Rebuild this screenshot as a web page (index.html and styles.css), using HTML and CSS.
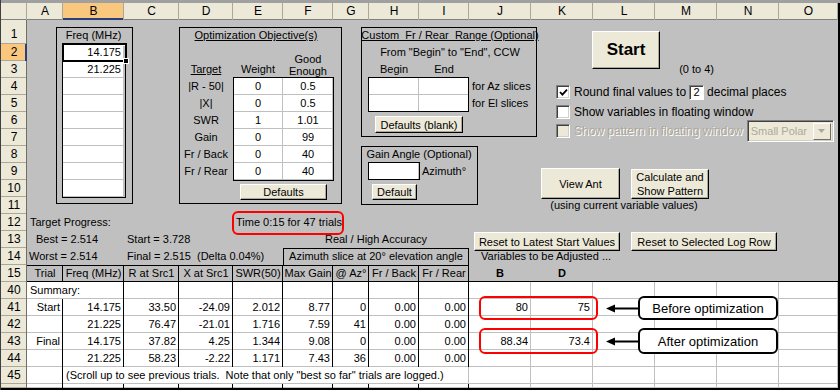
FILE: index.html
```html
<!DOCTYPE html>
<html>
<head>
<meta charset="utf-8">
<title>Optimizer</title>
<link rel="stylesheet" href="styles.css">
</head>
<body>
<div class="sheet">
  <div class="row hdr">
    <div class="ch"></div><div class="ch">A</div><div class="ch sel">B</div><div class="ch">C</div><div class="ch">D</div><div class="ch">E</div><div class="ch">F</div><div class="ch">G</div><div class="ch">H</div><div class="ch">I</div><div class="ch">J</div><div class="ch">K</div><div class="ch">L</div><div class="ch">M</div><div class="ch">N</div><div class="ch">O</div>
  </div>
  <div class="row r1">
    <div class="rn">1</div>
    <div class="c cB ctr"><span>Freq (MHz)</span></div>
    <div class="c sDF ctr"><u>Optimization Objective(s)</u></div>
    <div class="c sHJ ctr pre"><u>Custom  Fr / Rear  Range (Optional)</u></div>
  </div>
  <div class="row">
    <div class="rn sel">2</div>
    <div class="c cB w r">14.175</div>
    <div class="c sHJ ctr"><span>From "Begin" to "End", CCW</span></div>
  </div>
  <div class="row">
    <div class="rn">3</div>
    <div class="c cB w r">21.225</div>
    <div class="c cD ctr"><u>Target</u></div>
    <div class="c cE ctr"><span>Weight</span></div>
    <div class="c cF ge"><span>Good</span><span>Enough</span></div>
    <div class="c cH ctr"><span>Begin</span></div>
    <div class="c cI ctr"><span>End</span></div>
    <div class="c cM r">(0 to 4)</div>
  </div>
  <div class="row">
    <div class="rn">4</div>
    <div class="c cB w"></div>
    <div class="c cD ctr"><span>|R - 50|</span></div>
    <div class="c cE w ctr"><span>0</span></div>
    <div class="c cF w ctr"><span>0.5</span></div>
    <div class="c cH w"></div>
    <div class="c cI w"></div>
    <div class="c cJ">for Az slices</div>
  </div>
  <div class="row">
    <div class="rn">5</div>
    <div class="c cB w"></div>
    <div class="c cD ctr"><span>|X|</span></div>
    <div class="c cE w ctr"><span>0</span></div>
    <div class="c cF w ctr"><span>0.5</span></div>
    <div class="c cH w"></div>
    <div class="c cI w"></div>
    <div class="c cJ">for El slices</div>
  </div>
  <div class="row">
    <div class="rn">6</div>
    <div class="c cB w"></div>
    <div class="c cD ctr"><span>SWR</span></div>
    <div class="c cE w ctr"><span>1</span></div>
    <div class="c cF w ctr"><span>1.01</span></div>
  </div>
  <div class="row">
    <div class="rn">7</div>
    <div class="c cB w"></div>
    <div class="c cD ctr"><span>Gain</span></div>
    <div class="c cE w ctr"><span>0</span></div>
    <div class="c cF w ctr"><span>99</span></div>
  </div>
  <div class="row">
    <div class="rn">8</div>
    <div class="c cB w"></div>
    <div class="c cD ctr"><span>Fr / Back</span></div>
    <div class="c cE w ctr"><span>0</span></div>
    <div class="c cF w ctr"><span>40</span></div>
    <div class="c sHI ctr"><span>Gain Angle (Optional)</span></div>
  </div>
  <div class="row">
    <div class="rn">9</div>
    <div class="c cB w"></div>
    <div class="c cD ctr"><span>Fr / Rear</span></div>
    <div class="c cE w ctr"><span>0</span></div>
    <div class="c cF w ctr"><span>40</span></div>
    <div class="c cH w"></div>
    <div class="c cI">Azimuth°</div>
  </div>
  <div class="row">
    <div class="rn">10</div>
    <div class="c cB w"></div>
  </div>
  <div class="row">
    <div class="rn">11</div>
    <div class="c sKM ctr"><span>(using current variable values)</span></div>
  </div>
  <div class="row">
    <div class="rn">12</div>
    <div class="c cA">Target Progress:</div>
    <div class="c cE">Time 0:15 for 47 trials</div>
  </div>
  <div class="row">
    <div class="rn">13</div>
    <div class="c cA ind">Best = 2.514</div>
    <div class="c cC">Start = 3.728</div>
    <div class="c sFI ctr"><span>Real / High Accuracy</span></div>
  </div>
  <div class="row">
    <div class="rn">14</div>
    <div class="c cA tight">Worst = 2.514</div>
    <div class="c cC pre">Final = 2.515  (Delta 0.04%)</div>
    <div class="c sFI ctr azb"><span>Azimuth slice at 20° elevation angle</span></div>
    <div class="c cJ vind">Variables to be Adjusted ...</div>
  </div>
  <div class="row r15">
    <div class="rn">15</div>
    <div class="c cA th"><span>Trial</span></div>
    <div class="c cB th"><span>Freq (MHz)</span></div>
    <div class="c cC th"><span>R at Src1</span></div>
    <div class="c cD th"><span>X at Src1</span></div>
    <div class="c cE th"><span>SWR(50)</span></div>
    <div class="c cF th"><span>Max Gain</span></div>
    <div class="c cG th"><span>@ Az°</span></div>
    <div class="c cH th"><span>Fr / Back</span></div>
    <div class="c cI th"><span>Fr / Rear</span></div>
    <div class="c cJ ctr b"><span>B</span></div>
    <div class="c cK ctr b"><span>D</span></div>
  </div>
  <div class="row">
    <div class="rn">40</div>
    <div class="c sAB wd">Summary:</div>
    <div class="c wd"></div><div class="c wd"></div><div class="c wd"></div><div class="c wd"></div><div class="c wd"></div><div class="c wd"></div><div class="c wd"></div>
    <div class="c w"></div><div class="c w"></div><div class="c w"></div><div class="c w"></div><div class="c w"></div><div class="c w"></div>
  </div>
  <div class="row">
    <div class="rn">41</div>
    <div class="c wd r">Start</div><div class="c wd r">14.175</div><div class="c wd r">33.50</div><div class="c wd r">-24.09</div><div class="c wd r">2.012</div><div class="c wd r">8.77</div><div class="c wd r">0</div><div class="c wd r">0.00</div><div class="c wd r">0.00</div>
    <div class="c w r">80</div><div class="c w r">75</div><div class="c w"></div><div class="c w"></div><div class="c w"></div><div class="c w"></div>
  </div>
  <div class="row">
    <div class="rn">42</div>
    <div class="c wd r"></div><div class="c wd r">21.225</div><div class="c wd r">76.47</div><div class="c wd r">-21.01</div><div class="c wd r">1.716</div><div class="c wd r">7.59</div><div class="c wd r">41</div><div class="c wd r">0.00</div><div class="c wd r">0.00</div>
    <div class="c w"></div><div class="c w"></div><div class="c w"></div><div class="c w"></div><div class="c w"></div><div class="c w"></div>
  </div>
  <div class="row">
    <div class="rn">43</div>
    <div class="c wd r">Final</div><div class="c wd r">14.175</div><div class="c wd r">37.82</div><div class="c wd r">4.25</div><div class="c wd r">1.344</div><div class="c wd r">9.08</div><div class="c wd r">0</div><div class="c wd r">0.00</div><div class="c wd r">0.00</div>
    <div class="c w r">88.34</div><div class="c w r">73.4</div><div class="c w"></div><div class="c w"></div><div class="c w"></div><div class="c w"></div>
  </div>
  <div class="row">
    <div class="rn">44</div>
    <div class="c wd r"></div><div class="c wd r">21.225</div><div class="c wd r">58.23</div><div class="c wd r">-2.22</div><div class="c wd r">1.171</div><div class="c wd r">7.43</div><div class="c wd r">36</div><div class="c wd r">0.00</div><div class="c wd r">0.00</div>
    <div class="c w"></div><div class="c w"></div><div class="c w"></div><div class="c w"></div><div class="c w"></div><div class="c w"></div>
  </div>
  <div class="row">
    <div class="rn">45</div>
    <div class="c wd"></div>
    <div class="c sBI w pre">(Scroll up to see previous trials.  Note that only "best so far" trials are logged.)</div>
    <div class="c w"></div><div class="c w"></div><div class="c w"></div><div class="c w"></div><div class="c w"></div><div class="c w"></div>
  </div>
  <div class="row r46">
    <div class="rn"></div>
    <div class="c wd"></div><div class="c wd"></div><div class="c wd"></div><div class="c wd"></div><div class="c wd"></div><div class="c wd"></div><div class="c wd"></div><div class="c wd"></div><div class="c wd"></div>
    <div class="c w"></div><div class="c w"></div><div class="c w"></div><div class="c w"></div><div class="c w"></div><div class="c w"></div>
  </div>

  <!-- drawn frames -->
  <div class="fr f-freq"></div>
  <div class="fr f-freqin"></div>
  <div class="selbox"></div>
  <div class="handle"></div>
  <div class="fr f-opt"></div>
  <div class="fr f-optt"></div>
  <div class="fr f-cust"></div>
  <div class="fr f-custt"></div>
  <div class="fr f-gain"></div>
  <div class="fr f-gaint"></div>

  <!-- buttons -->
  <div class="btn b-defaults">Defaults</div>
  <div class="btn b-blank">Defaults (blank)</div>
  <div class="btn b-default">Default</div>
  <div class="btn b-start">Start</div>
  <div class="btn b-view">View Ant</div>
  <div class="btn b-calc">Calculate and<br>Show Pattern</div>
  <div class="btn b-reset1">Reset to Latest Start Values</div>
  <div class="btn b-reset2">Reset to Selected Log Row</div>

  <!-- options -->
  <div class="opts">
    <div class="opt">
      <span class="cb"><svg width="9" height="9" viewBox="0 0 9 9"><polyline points="1,4 3.4,6.6 8,1.6" fill="none" stroke="#000" stroke-width="1.8"/></svg></span>
      <span>Round final values to</span>
      <span class="tb">2</span>
      <span>decimal places</span>
    </div>
    <div class="opt">
      <span class="cb"></span>
      <span>Show variables in floating window</span>
    </div>
    <div class="opt dis">
      <span class="cb off"></span>
      <span>Show pattern in floating window</span>
      <span class="dd"><span class="ddt">Small Polar</span><span class="ddb"><svg width="7" height="4" viewBox="0 0 7 4"><path d="M0 0H7L3.5 4Z" fill="#aca899"/></svg></span></span>
    </div>
  </div>

  <!-- highlights and callouts -->
  <div class="red red-time"></div>
  <div class="red red-41"></div>
  <div class="red red-43"></div>
  <svg class="arr arr1" width="32" height="9" viewBox="0 0 32 9"><path d="M0 4.5L9 0.5V8.5Z" fill="#000"/><rect x="8" y="3.5" width="24" height="2" fill="#000"/></svg>
  <svg class="arr arr2" width="32" height="9" viewBox="0 0 32 9"><path d="M0 4.5L9 0.5V8.5Z" fill="#000"/><rect x="8" y="3.5" width="24" height="2" fill="#000"/></svg>
  <div class="call call1">Before optimization</div>
  <div class="call call2">After optimization</div>
</div>
</body>
</html>
```

FILE: styles.css
```css
* { box-sizing: border-box; }
html, body { margin: 0; padding: 0; }
body {
  background: #fff;
  font-family: "Liberation Sans", Arial, sans-serif;
  font-size: 11px;
  color: #000;
}
.sheet {
  position: relative;
  width: 840px;
  height: 390px;
  padding: 3px 2px 2px 1px;
  background: #c0c0c0;
  box-shadow: inset 1px 0 0 #404040, inset 0 3px 0 #a0a0a0, inset -2px 0 0 #000, inset 0 -2px 0 #000;
  overflow: hidden;
}
.row {
  display: grid;
  grid-template-columns: 26px 36px 61px 55px 54px 50px 50px 36px 50px 50px 62px 62px 62px 62px 62px 59px;
  grid-template-rows: 17px;
  height: 17px;
}
.row > * { grid-row: 1; }
.r1 { height: 24px; grid-template-rows: 24px; }
.r46 { height: 4px; grid-template-rows: 4px; overflow: hidden; }

.ch {
  background: #ece9d8;
  text-align: center;
  font-size: 12px;
  line-height: 17px;
  box-shadow: inset -1px 0 0 #aca899, inset 0 -1px 0 #808080;
}
.ch.sel { background: #f9c77e; box-shadow: inset -1px 0 0 #aca899, inset 0 -2px 0 #2a3f7c; }
.rn {
  grid-column: 1;
  background: #ece9d8;
  text-align: center;
  font-size: 12px;
  line-height: 17px;
  box-shadow: inset -1px 0 0 #716f64, inset 0 -1px 0 #aca899;
  overflow: hidden;
}
.rn.sel { background: #f9c77e; box-shadow: inset -2px 0 0 #2a3f7c, inset 0 -1px 0 #aca899; }
.r1 .rn { padding-top: 6px; }
.r1 .c { align-self: end; }

.c { line-height: 17px; padding: 0 3px; white-space: nowrap; }
.ctr { display: flex; justify-content: center; }
.r { text-align: right; }
.pre { white-space: pre; }
.b { font-weight: bold; }
.ind { padding-left: 9px; }
.tight { padding-left: 2px; }
.vind { padding-left: 12px; }
.w { background: #fff; box-shadow: inset -1px -1px 0 #c0c0c0; }
.wd { background: #fff; box-shadow: inset -1px 0 0 #000, inset 0 -1px 0 #c0c0c0; }

.cA { grid-column: 2; } .cB { grid-column: 3; } .cC { grid-column: 4; } .cD { grid-column: 5; }
.cE { grid-column: 6; } .cF { grid-column: 7; } .cG { grid-column: 8; } .cH { grid-column: 9; }
.cI { grid-column: 10; } .cJ { grid-column: 11; } .cK { grid-column: 12; } .cL { grid-column: 13; }
.cM { grid-column: 14; } .cN { grid-column: 15; } .cO { grid-column: 16; }
.sDF { grid-column: 5 / 8; }
.sHJ { grid-column: 9 / 12; }
.sHI { grid-column: 9 / 11; }
.sFI { grid-column: 7 / 11; }
.sKM { grid-column: 12 / 15; }
.sAB { grid-column: 2 / 4; }
.sBI { grid-column: 3 / 11; }

.ge {
  display: flex;
  flex-direction: column;
  justify-content: flex-end;
  align-items: center;
  line-height: 12px;
  padding-bottom: 1px;
}
.azb { box-shadow: inset 1px 0 0 #000, inset -1px 0 0 #000, inset 0 1px 0 #000; }
.r15 { box-shadow: inset 0 -1px 0 #000; }
.th {
  display: flex;
  justify-content: center;
  box-shadow: inset -1px 0 0 #000, inset 0 1px 0 #000;
}

/* frames */
.fr { position: absolute; border: 1px solid #000; }
.f-freq { left: 56px; top: 27px; width: 77px; height: 177px; }
.f-freqin { left: 62px; top: 43px; width: 64px; height: 155px; }
.f-opt { left: 179px; top: 27px; width: 163px; height: 177px; }
.f-optt { left: 233px; top: 77px; width: 101px; height: 104px; }
.f-cust { left: 361px; top: 27px; width: 176px; height: 110px; }
.f-custt { left: 368px; top: 77px; width: 101px; height: 35px; }
.f-gain { left: 361px; top: 146px; width: 117px; height: 59px; }
.f-gaint { left: 368px; top: 162px; width: 52px; height: 18px; }
.selbox {
  position: absolute;
  left: 62px; top: 43px; width: 65px; height: 19px;
  border: 2px solid #000;
  box-shadow: inset 1px 1px 0 #fff;
}
.handle {
  position: absolute;
  left: 123px; top: 58px; width: 6px; height: 6px;
  background: #000;
  border: 1px solid #fff;
}

/* buttons */
.btn {
  position: absolute;
  display: flex;
  align-items: center;
  justify-content: center;
  text-align: center;
  background: #ece9d8;
  border: 1px solid;
  border-color: #fff #000 #000 #fff;
  box-shadow: inset -1px -1px 0 #aca899;
  font-size: 11px;
  line-height: 14px;
  white-space: nowrap;
}
.b-defaults { left: 240px; top: 184px; width: 87px; height: 16px; }
.b-blank { left: 375px; top: 116px; width: 88px; height: 17px; }
.b-default { left: 372px; top: 184px; width: 45px; height: 16px; }
.b-start { left: 592px; top: 31px; width: 68px; height: 38px; font-size: 17px; font-weight: bold; }
.b-view { left: 541px; top: 168px; width: 79px; height: 31px; }
.b-calc { left: 631px; top: 169px; width: 78px; height: 30px; }
.b-reset1 { left: 474px; top: 232px; width: 146px; height: 19px; }
.b-reset2 { left: 631px; top: 232px; width: 146px; height: 19px; }

/* options */
.opts {
  position: absolute;
  left: 556px;
  top: 82px;
  display: flex;
  flex-direction: column;
  font-size: 12px;
}
.opt { display: flex; align-items: center; gap: 4px; height: 20px; white-space: nowrap; }
.opt:nth-child(2) { height: 19px; }
.cb {
  width: 14px; height: 14px;
  background: #fff;
  border: 1px solid;
  border-color: #808080 #fff #fff #808080;
  box-shadow: inset 1px 1px 0 #404040, inset -1px -1px 0 #d4d0c8;
  display: flex;
  align-items: center;
  justify-content: center;
}
.cb.off { background: #ece9d8; }
.tb {
  width: 15px; height: 15px;
  background: #fff;
  border: 1px solid;
  border-color: #808080 #fff #fff #808080;
  box-shadow: inset 1px 1px 0 #404040;
  font-size: 11px;
  line-height: 13px;
  text-align: center;
  margin: 0 -1px;
}
.dis > span:nth-child(2) { color: #aca899; text-shadow: 1px 1px 0 #fff; }
.dd {
  width: 87px; height: 22px;
  display: flex;
  align-items: center;
  justify-content: space-between;
  background: #ece9d8;
  border: 1px solid;
  border-color: #808080 #fff #fff #808080;
  box-shadow: inset 1px 1px 0 #404040, inset -1px -1px 0 #d4d0c8;
  padding: 2px;
}
.ddt { color: #aca899; font-size: 11px; padding-left: 1px; }
.ddb {
  width: 18px; height: 17px;
  display: flex;
  align-items: center;
  justify-content: center;
  background: #ece9d8;
  border: 1px solid;
  border-color: #fff #716f64 #716f64 #fff;
}

/* highlights */
.red { position: absolute; border: 2px solid #f00; border-radius: 6px; }
.red-time { left: 232px; top: 211px; width: 112px; height: 24px; }
.red-41 { left: 479px; top: 296px; width: 119px; height: 24px; }
.red-43 { left: 479px; top: 328px; width: 119px; height: 26px; }
.arr { position: absolute; left: 606px; }
.arr1 { top: 304px; }
.arr2 { top: 337px; }
.call {
  position: absolute;
  left: 638px;
  width: 140px;
  display: flex;
  align-items: center;
  justify-content: center;
  background: #fff;
  border: 2px solid #000;
  border-radius: 6px;
  font-size: 13px;
}
.call1 { top: 296px; height: 24px; }
.call2 { top: 328px; height: 26px; }
```
